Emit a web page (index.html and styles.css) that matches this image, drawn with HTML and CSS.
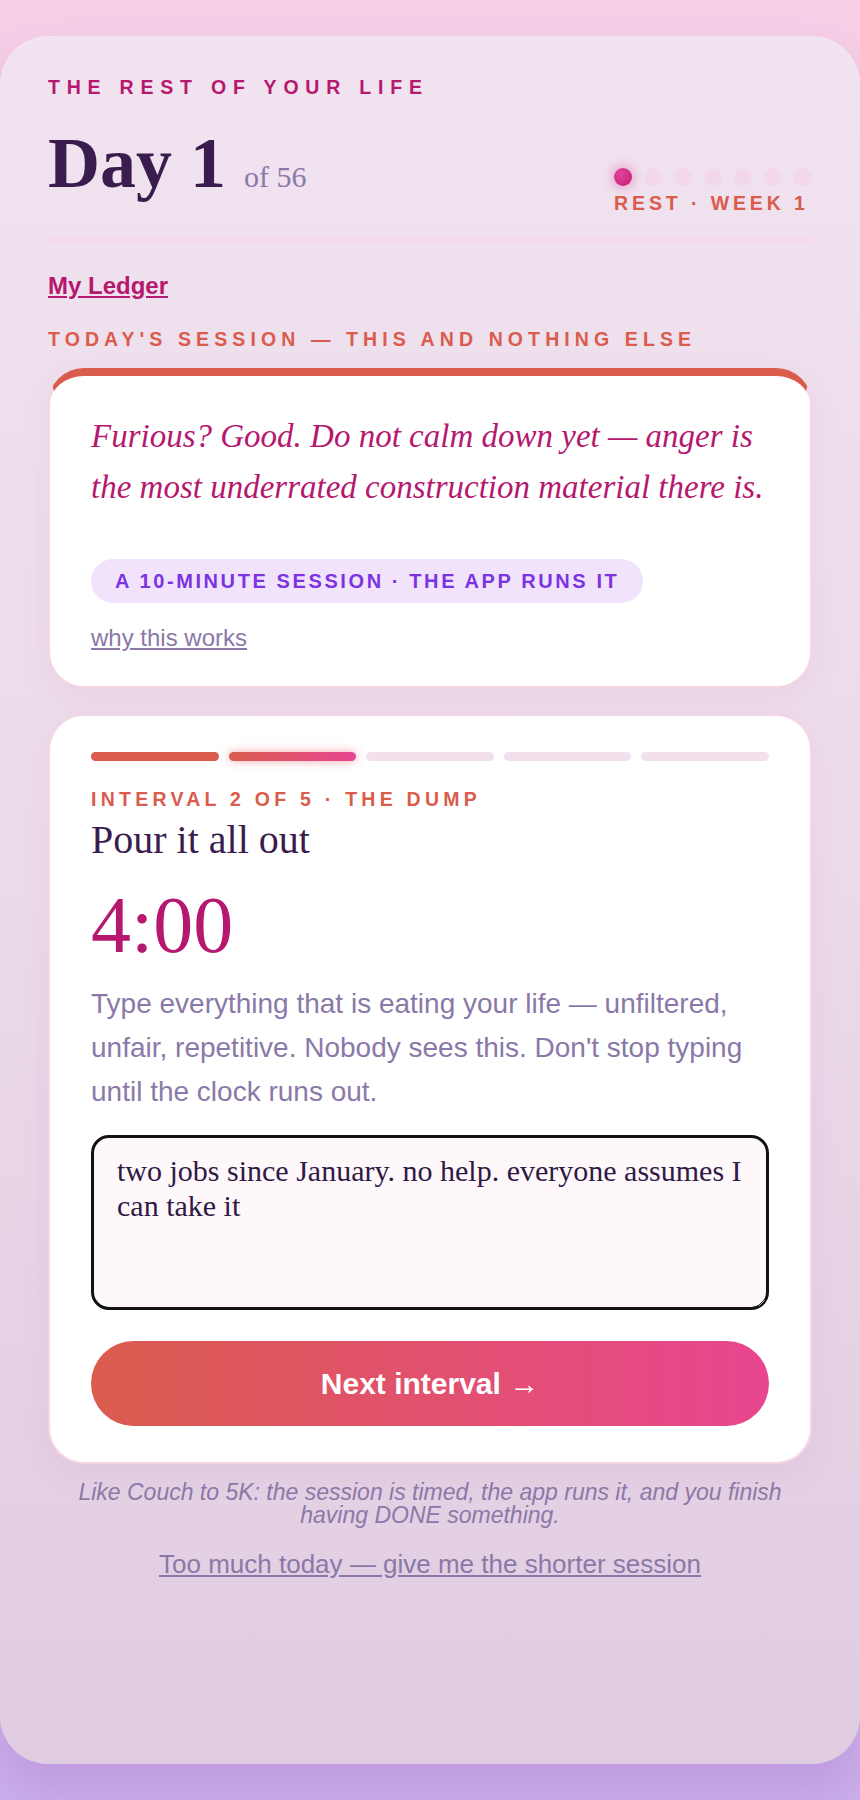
FILE: index.html
```html
<!DOCTYPE html>
<html lang="en">
<head>
<meta charset="utf-8">
<title>The Rest of Your Life</title>
<link rel="stylesheet" href="styles.css">
</head>
<body>
<main class="shell">
  <p class="eyebrow">THE REST OF YOUR LIFE</p>
  <header class="head">
    <h1 class="day">Day 1<span class="of">of 56</span></h1>
    <div class="phase">
      <div class="dots">
        <span class="dot on"></span><span class="dot"></span><span class="dot"></span><span class="dot"></span><span class="dot"></span><span class="dot"></span><span class="dot"></span>
      </div>
      <div class="phase-label">REST · WEEK 1</div>
    </div>
  </header>
  <div class="track"></div>
  <nav class="links"><a class="ledger" href="#">My Ledger</a></nav>
  <p class="section-label">TODAY'S SESSION — THIS AND NOTHING ELSE</p>

  <section class="card card-quote">
    <p class="quote">Furious? Good. Do not calm down yet — anger is the most underrated construction material there is.</p>
    <span class="pill">A 10-MINUTE SESSION · THE APP RUNS IT</span>
    <a class="why" href="#">why this works</a>
  </section>

  <section class="card card-session">
    <div class="segs">
      <span class="seg done"></span><span class="seg now"></span><span class="seg"></span><span class="seg"></span><span class="seg"></span>
    </div>
    <p class="interval">INTERVAL 2 OF 5 · THE DUMP</p>
    <h2 class="step-title">Pour it all out</h2>
    <div class="timer">4:00</div>
    <p class="desc">Type everything that is eating your life — unfiltered, unfair, repetitive. Nobody sees this. Don't stop typing until the clock runs out.</p>
    <textarea class="dump">two jobs since January. no help. everyone assumes I can take it</textarea>
    <button class="next" type="button">Next interval →</button>
  </section>

  <p class="foot">Like Couch to 5K: the session is timed, the app runs it, and you finish having DONE something.</p>
  <p class="short"><a href="#">Too much today — give me the shorter session</a></p>
</main>
</body>
</html>
```

FILE: styles.css
```css
* { box-sizing: border-box; }

html, body { margin: 0; }

body {
  min-height: 100vh;
  padding: 36px 0;
  background: linear-gradient(180deg, #f8cfe7 0%, #eccfe9 40%, #dbc2ea 75%, #ccafec 100%);
  font-family: "Liberation Sans", Arial, sans-serif;
}

.shell {
  min-height: calc(100vh - 72px);
  border-radius: 48px;
  background: linear-gradient(180deg, #f1e3ef 0%, #ecdbea 45%, #e0cce1 100%);
  padding: 39px 48px 48px;
  box-shadow: 0 24px 48px rgba(130, 70, 170, 0.22);
}

.eyebrow {
  margin: 0;
  font-size: 19.5px;
  line-height: 24px;
  font-weight: 700;
  letter-spacing: 6.8px;
  color: #b5186e;
}

.head {
  display: flex;
  justify-content: space-between;
  align-items: flex-start;
  margin-top: 28px;
}

.day {
  margin: 0;
  font-family: "Liberation Serif", "Times New Roman", serif;
  font-weight: 700;
  font-size: 72px;
  line-height: 72px;
  color: #3a1d4e;
}

.day .of {
  margin-left: 18px;
  font-size: 30px;
  font-weight: 400;
  color: #8a79a8;
}

.phase {
  margin-top: 41px;
  display: flex;
  flex-direction: column;
  align-items: flex-start;
}

.dots {
  display: flex;
  gap: 12px;
}

.dot {
  width: 18px;
  height: 18px;
  border-radius: 50%;
  background: #f3d8e9;
}

.dot.on {
  background: radial-gradient(circle at 35% 35%, #e2449a, #c41b73);
  box-shadow: 0 0 10px 3px rgba(220, 50, 140, 0.3);
}

.phase-label {
  margin-top: 5px;
  font-size: 19.5px;
  line-height: 24px;
  font-weight: 700;
  letter-spacing: 3.9px;
  color: #d95c4c;
}

.track {
  margin-top: 22px;
  height: 6px;
  border-radius: 3px;
  background: #f6d8ea;
}

.links {
  display: flex;
  margin-top: 28.7px;
}

.ledger {
  font-size: 24px;
  line-height: 28px;
  font-weight: 700;
  color: #b5186e;
  text-decoration: underline;
}

.section-label {
  margin: 27.5px 0 0;
  font-size: 19.5px;
  line-height: 24px;
  font-weight: 700;
  letter-spacing: 5.1px;
  color: #d95c4c;
}

.card {
  background: #ffffff;
  border: 2px solid #f4d6e6;
  border-radius: 36px;
  box-shadow: 0 10px 30px rgba(180, 90, 150, 0.08);
}

.card-quote {
  margin-top: 16.8px;
  border-top: 8px solid #d95c4c;
  padding: 35px 41px 34px;
  display: flex;
  flex-direction: column;
  align-items: flex-start;
}

.quote {
  margin: 0;
  font-family: "Liberation Serif", "Times New Roman", serif;
  font-style: italic;
  font-size: 33px;
  line-height: 51px;
  color: #b5186e;
}

.pill {
  margin-top: 46px;
  padding: 10px 24px;
  border-radius: 999px;
  background: #f1e3fb;
  color: #7c34e3;
  font-size: 20px;
  line-height: 24px;
  font-weight: 700;
  letter-spacing: 2.6px;
}

.why {
  margin-top: 20.7px;
  font-size: 24px;
  line-height: 28px;
  color: #8a79a8;
  text-decoration: underline;
}

.card-session {
  margin-top: 26px;
  padding: 36px 41px 36px;
}

.segs {
  display: flex;
  gap: 10px;
}

.seg {
  flex: 1;
  height: 9px;
  border-radius: 5px;
  background: #f2e0ec;
}

.seg.done { background: #d95c4c; }

.seg.now {
  background: linear-gradient(90deg, #d95c50, #e8468f);
  box-shadow: 0 0 10px rgba(230, 90, 100, 0.55);
}

.interval {
  margin: 26px 0 0;
  font-size: 19.5px;
  line-height: 24px;
  font-weight: 700;
  letter-spacing: 4.25px;
  color: #d95c4c;
}

.step-title {
  margin: 6px 0 0;
  font-family: "Liberation Serif", "Times New Roman", serif;
  font-weight: 400;
  font-size: 40px;
  line-height: 46.8px;
  color: #3a1d4e;
}

.timer {
  margin-top: 21.5px;
  font-family: "Liberation Serif", "Times New Roman", serif;
  font-size: 80px;
  line-height: 80px;
  color: #b5186e;
}

.desc {
  margin: 17px 0 0;
  font-size: 28px;
  line-height: 44px;
  color: #8a79a8;
}

.dump {
  display: block;
  width: 100%;
  height: 175px;
  margin-top: 21.4px;
  padding: 16px 23px;
  border: 3px solid #121212;
  border-radius: 18px;
  background: #fff8fb;
  font-family: "Liberation Serif", "Times New Roman", serif;
  font-size: 30px;
  line-height: 1.15;
  color: #2e1a44;
  outline: none;
}

.next {
  display: block;
  width: 100%;
  height: 85px;
  margin-top: 31px;
  border: 0;
  border-radius: 999px;
  background: linear-gradient(90deg, #db5c4e, #e8468f);
  color: #ffffff;
  font-family: "Liberation Sans", Arial, sans-serif;
  font-size: 30px;
  font-weight: 700;
}

.foot {
  margin: 16.5px 0 0;
  text-align: center;
  font-style: italic;
  font-size: 23px;
  line-height: 23px;
  color: #8a79a8;
}

.short {
  margin: 22.5px 0 0;
  text-align: center;
  font-size: 26px;
  line-height: 30px;
}

.short a {
  color: #8a79a8;
  text-decoration: underline;
}
```
